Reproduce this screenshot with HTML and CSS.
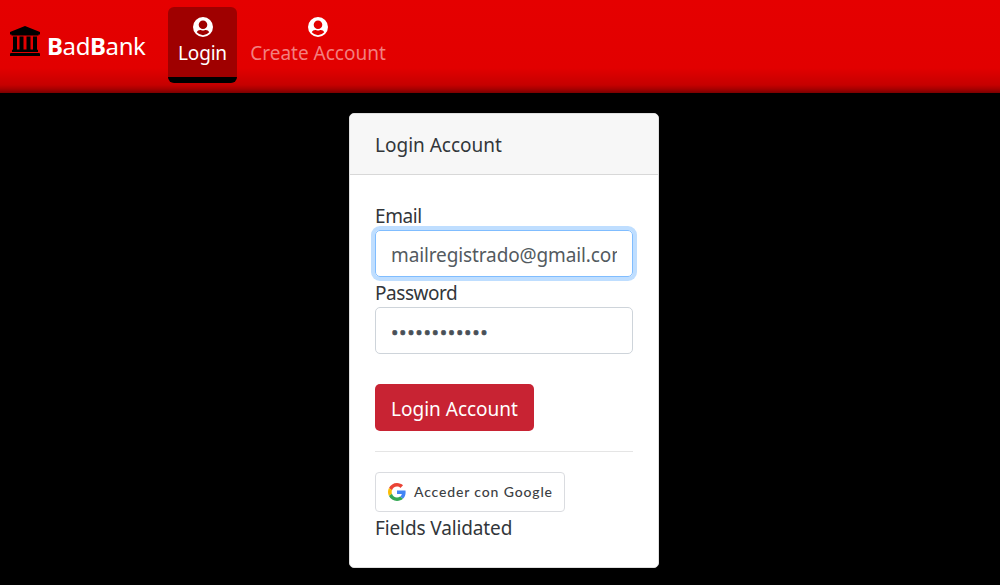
FILE: index.html
```html
<!DOCTYPE html>
<html lang="en">
<head>
<meta charset="utf-8">
<title>BadBank</title>
<link rel="stylesheet" href="styles.css">
</head>
<body>
<nav class="navbar">
  <a class="brand">
    <svg class="bank-icon" viewBox="0 0 30 30" aria-hidden="true"><path d="M15 0L30 6V8.5H28.5V9.5H1.5V8.5H0V6ZM3 10.5H7V23.5H9.5V10.5H13.5V23.5H16.5V10.5H20.5V23.5H23V10.5H27V23.5L28 24V26H2V24L3 23.5ZM0.7 27H29.3L30 27.8V30H0V27.8Z"/></svg>
    <span class="brand-name"><b>B</b>ad<b>B</b>ank</span>
  </a>
  <a class="nav-link active">
    <svg class="user-icon" viewBox="0 0 20 20" aria-hidden="true"><path fill-rule="evenodd" d="M10 0A10 10 0 1 1 10 20A10 10 0 1 1 10 0ZM10 3.4A4.3 4.3 0 1 0 10 12A4.3 4.3 0 1 0 10 3.4ZM3.8 15.3A8.2 8.2 0 0 0 16.2 15.3C15.5 13.7 14.4 13 12.8 13C11.8 13 11.4 13.5 10 13.5C8.6 13.5 8.2 13 7.2 13C5.6 13 4.5 13.7 3.8 15.3Z"/></svg>
    <span class="login-label">Login</span>
  </a>
  <a class="nav-link">
    <svg class="user-icon" viewBox="0 0 20 20" aria-hidden="true"><path fill-rule="evenodd" d="M10 0A10 10 0 1 1 10 20A10 10 0 1 1 10 0ZM10 3.4A4.3 4.3 0 1 0 10 12A4.3 4.3 0 1 0 10 3.4ZM3.8 15.3A8.2 8.2 0 0 0 16.2 15.3C15.5 13.7 14.4 13 12.8 13C11.8 13 11.4 13.5 10 13.5C8.6 13.5 8.2 13 7.2 13C5.6 13 4.5 13.7 3.8 15.3Z"/></svg>
    <span class="create-label">Create Account</span>
  </a>
</nav>
<main class="card">
  <div class="card-header"><span class="title">Login Account</span></div>
  <div class="card-body">
    <div class="label email-label">Email</div>
    <div class="field focused"><div class="value email">mailregistrado@gmail.com</div></div>
    <div class="label password-label">Password</div>
    <div class="field"><div class="value dots">••••••••••••</div></div>
    <button class="submit">Login Account</button>
    <hr class="rule">
    <button class="google">
      <svg class="google-icon" viewBox="0 0 48 48" aria-hidden="true"><path fill="#ea4335" d="M24 9.5c3.54 0 6.71 1.22 9.21 3.6l6.85-6.85C35.9 2.38 30.47 0 24 0 14.62 0 6.51 5.38 2.56 13.22l7.98 6.19C12.43 13.72 17.74 9.5 24 9.5z"/><path fill="#4285f4" d="M46.98 24.55c0-1.57-.15-3.09-.38-4.55H24v9.02h12.94c-.58 2.96-2.26 5.48-4.78 7.18l7.73 6c4.51-4.18 7.09-10.36 7.09-17.65z"/><path fill="#fbbc05" d="M10.53 28.59c-.48-1.45-.76-2.99-.76-4.59s.27-3.14.76-4.59l-7.98-6.19C.92 16.46 0 20.12 0 24c0 3.88.92 7.54 2.56 10.78l7.97-6.19z"/><path fill="#34a853" d="M24 48c6.48 0 11.93-2.13 15.89-5.81l-7.73-6c-2.15 1.45-4.92 2.3-8.16 2.3-6.26 0-11.57-4.22-13.47-9.91l-7.98 6.19C6.51 42.62 14.62 48 24 48z"/></svg>
      <span class="google-label">Acceder con Google</span>
    </button>
    <div class="label status">Fields Validated</div>
  </div>
</main>
</body>
</html>
```
FILE: styles.css
```css
* { box-sizing: border-box; }
body {
  margin: 0;
  background: #000;
  color: #32363a;
  font: 19px/30px "Noto Sans", "Open Sans", sans-serif;
  white-space: nowrap;
  overflow: hidden;
}
.navbar {
  display: flex;
  height: 93px;
  padding: 7px 10px 10px;
  background: linear-gradient(#e50000 0, #e20000 68px, #c60000 85px, #a80000 89px, #7a0000 93px);
}
.brand { display: flex; width: 158px; padding-top: 19px; }
.bank-icon { width: 30px; height: 30px; fill: #000; flex: none; }
.brand-name { margin: 5px 0 0 7px; color: #fff; font-size: 24px; letter-spacing: -.4px; }
.nav-link {
  display: flex;
  flex-direction: column;
  align-items: center;
  width: 69px;
  padding-top: 10px;
  height: 76px;
  color: #f37f7f;
}
.nav-link + .nav-link { width: 136px; margin-left: 13px; }
.nav-link.active {
  color: #fff;
  background: #9f0000;
  border-bottom: 6px solid #000;
  border-radius: 6px;
}
.user-icon { width: 20px; height: 20px; fill: #fff; flex: none; }
.nav-link span { margin-top: 1px; }
.login-label { letter-spacing: -.2px; }
.card {
  width: 310px;
  height: 455px;
  margin: 20px 0 0 349px;
  background: #fff;
  border: 1px solid #dfdfdf;
  border-radius: 5px;
  overflow: hidden;
}
.card-header {
  height: 61px;
  padding: 16px 25px;
  background: #f7f7f7;
  border-bottom: 1px solid #d8d8d8;
}
.card-body { padding: 25px; }
.label { height: 30px; }
.email-label { line-height: 32px; letter-spacing: -.4px; }
.password-label { line-height: 32px; letter-spacing: -.45px; }
.field {
  height: 47px;
  padding: 9px 15px;
  border: 1px solid #ced4da;
  border-radius: 5px;
  color: #535a60;
}
.focused { border-color: #80bdff; box-shadow: 0 0 0 4px #bfdeff; }
.value { overflow: hidden; }
.email { letter-spacing: -.12px; }
.dots {
  font: 20px/32px "Open Sans", sans-serif;
  letter-spacing: .6px;
  color: #495057;
  -webkit-text-stroke: .7px #495057;
}
.submit {
  display: block;
  width: 159px;
  height: 47px;
  margin: 30px 0 0;
  padding: 2px 0 0;
  border: 0;
  border-radius: 5px;
  background: #c82333;
  color: #fff;
  font: inherit;
}
.rule { height: 1px; margin: 20px 0; border: 0; background: #e5e5e5; }
.google {
  display: flex;
  align-items: center;
  width: 190px;
  height: 40px;
  padding: 0 12px;
  border: 1px solid #dadce0;
  border-radius: 4px;
  background: #fff;
  color: #3c4043;
  font: 500 14px Lato, sans-serif;
}
.google-icon { width: 18px; height: 18px; margin-right: 8px; flex: none; }
.google-label { letter-spacing: .85px; padding-bottom: 1px; }
.status { margin-top: 1px; letter-spacing: -.12px; }
```
